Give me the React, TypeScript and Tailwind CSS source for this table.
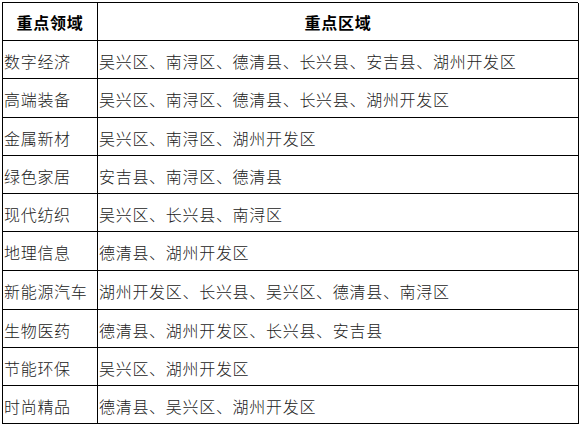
import React from 'react';

const rows: { field: string; areas: string; h: string }[] = [
  { field: '数字经济', areas: '吴兴区、南浔区、德清县、长兴县、安吉县、湖州开发区', h: 'h-[38px]' },
  { field: '高端装备', areas: '吴兴区、南浔区、德清县、长兴县、湖州开发区', h: 'h-[39px]' },
  { field: '金属新材', areas: '吴兴区、南浔区、湖州开发区', h: 'h-[38px]' },
  { field: '绿色家居', areas: '安吉县、南浔区、德清县', h: 'h-[38px]' },
  { field: '现代纺织', areas: '吴兴区、长兴县、南浔区', h: 'h-[38px]' },
  { field: '地理信息', areas: '德清县、湖州开发区', h: 'h-[39px]' },
  { field: '新能源汽车', areas: '湖州开发区、长兴县、吴兴区、德清县、南浔区', h: 'h-[39px]' },
  { field: '生物医药', areas: '德清县、湖州开发区、长兴县、安吉县', h: 'h-[38px]' },
  { field: '节能环保', areas: '吴兴区、湖州开发区', h: 'h-[38px]' },
  { field: '时尚精品', areas: '德清县、吴兴区、湖州开发区', h: 'h-[38px]' },
];

const font = { fontFamily: '"Noto Sans CJK SC", "Noto Sans", sans-serif' };

export default function App() {
  return (
    <div className="min-h-[426px] w-[582px] bg-white p-[2px]" style={font}>
      <div className="grid w-[576px] grid-cols-[95px_481px] border-l border-t border-black text-[16px] font-light leading-none tracking-[0.7px] text-[#222]">
        {/* Header */}
        <div className="flex h-[38px] items-center justify-center border-b border-r border-black font-bold text-black">
          重点领域
        </div>
        <div className="flex h-[38px] items-center justify-center border-b border-r border-black font-bold text-black">
          重点区域
        </div>

        {rows.map((row) => (
          <React.Fragment key={row.field}>
            <div className={`flex items-center whitespace-nowrap border-b border-r border-black pl-px pt-[2px] ${row.h}`}>
              {row.field}
            </div>
            <div className={`flex items-center whitespace-nowrap border-b border-r border-black pl-px pt-[2px] ${row.h}`}>
              {row.areas}
            </div>
          </React.Fragment>
        ))}
      </div>
    </div>
  );
}
